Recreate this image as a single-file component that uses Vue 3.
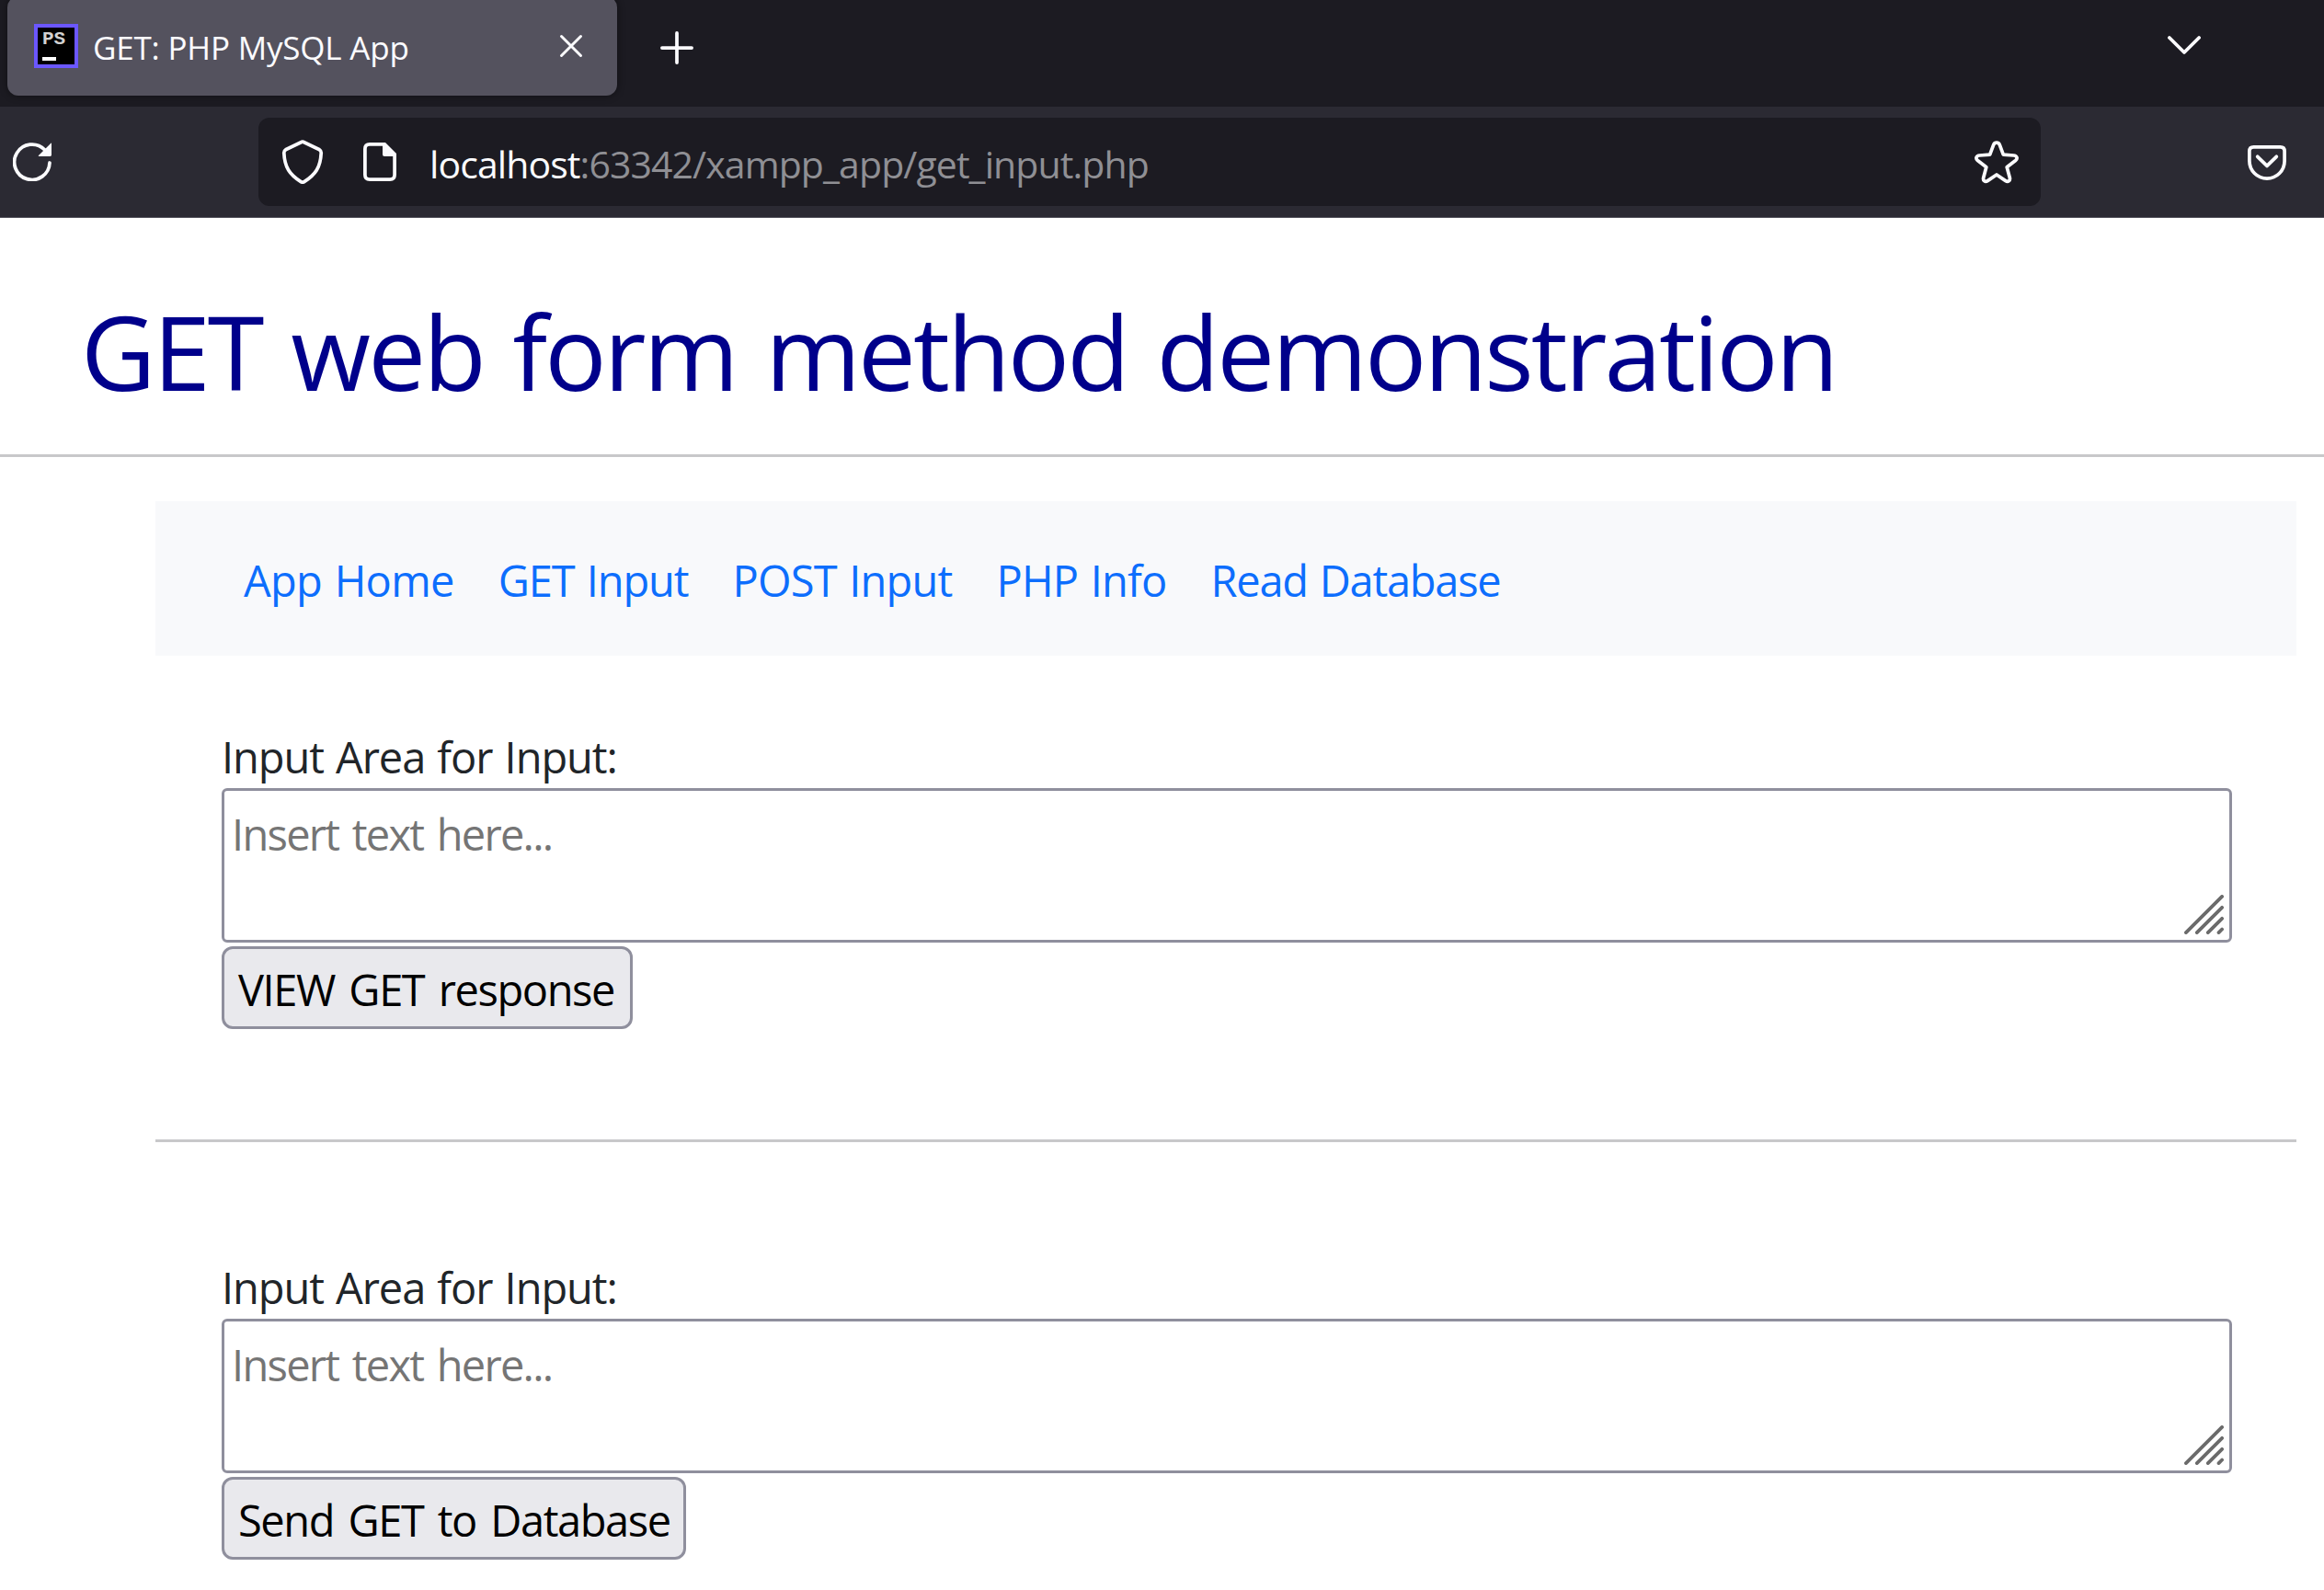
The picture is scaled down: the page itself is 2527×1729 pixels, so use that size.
<script setup>
const links = [
  { label: 'App Home', cls: 'home' },
  { label: 'GET Input', cls: 'get' },
  { label: 'POST Input', cls: 'post' },
  { label: 'PHP Info', cls: 'info' },
  { label: 'Read Database', cls: 'read' }
]
const forms = [
  { id: 'view', button: 'VIEW GET response' },
  { id: 'send', button: 'Send GET to Database' }
]
</script>

<template>
  <div class="window">
    <div class="tabstrip">
      <div class="tab">
        <div class="favicon"><span class="fav-text">PS</span><span class="fav-bar"></span></div>
        <span class="tab-title">GET: PHP MySQL App</span>
        <svg class="close" width="28" height="28" viewBox="0 0 28 28"><path d="M3.5 3.5 24.5 24.5M24.5 3.5 3.5 24.5" /></svg>
      </div>
      <svg class="plus" width="36" height="36" viewBox="0 0 36 36"><path d="M18 1.9V34.1M1.9 18H34.1" /></svg>
      <svg class="chevron" width="36" height="20" viewBox="0 0 36 20"><path d="M1.9 2 18 18 34.1 2" /></svg>
    </div>

    <div class="toolbar">
      <svg class="reload" width="42" height="42" viewBox="0 0 42 42">
        <path d="M40 22A19.2 19.2 0 1 1 34.5 7.8" />
        <path class="solid" d="M41.6 .6Q42 .2 42 1V13.6Q42 15 40.6 15H28.6Q27 15 28 14Z" />
      </svg>
      <div class="urlbar">
        <svg class="shield" width="48" height="48" viewBox="0 0 48 48"><path d="M22.3 2.8Q24 1.4 25.7 2.8L42.4 10.8Q44.4 12 44.2 14.5C43.5 30 38 38 25.8 45.6Q24 46.8 22.2 45.6C10 38 4.5 30 3.8 14.5Q3.6 12 5.6 10.8Z" /></svg>
        <svg class="page-icon" width="36" height="42" viewBox="0 0 36 42">
          <path d="M7 1.9H22L34.1 14V35Q34.1 40.1 29 40.1H7Q1.9 40.1 1.9 35V7Q1.9 1.9 7 1.9Z" />
          <path class="solid" d="M21 0H24L36 12V15H23Q21 15 21 13Z" />
        </svg>
        <span class="url"><span class="host">localhost</span><span class="path">:63342/xampp_app/get_input.php</span></span>
        <svg class="star" width="48" height="48" viewBox="0 0 48 48"><path d="M20.8 5.2C22 2.4 26 2.4 27.2 5.2L31.3 16.2 42.5 17C46.2 17.3 47.2 20.3 44.6 22.5L35.2 29.8 38.3 41.3C39.1 44.6 36.4 46.3 33.8 44.6L24 38 14.2 44.6C11.6 46.3 8.9 44.6 9.7 41.3L12.8 29.8 3.4 22.5C.8 20.3 1.8 17.3 5.5 17L16.7 16.2Z" /></svg>
      </div>
      <svg class="pocket" width="42" height="38" viewBox="0 0 42 38">
        <path d="M6.5 1.9H35.5Q40.1 1.9 40.1 6.5V17A19.1 19.1 0 0 1 1.9 17V6.5Q1.9 1.9 6.5 1.9Z" />
        <path d="M10.7 12.3 21 22.4 31.3 12.3" />
      </svg>
    </div>

    <h1>GET web form method demonstration</h1>

    <main>
      <nav>
        <a v-for="l in links" :key="l.cls" :class="l.cls">{{ l.label }}</a>
      </nav>
      <form v-for="f in forms" :key="f.id" :class="f.id" @submit.prevent>
        <label :for="f.id">Input Area for Input:</label>
        <div class="area">
          <textarea :id="f.id" placeholder="Insert text here..."></textarea>
          <svg class="grip" width="43" height="43" viewBox="0 0 43 43"><path d="M1.9 41.1 41.1 1.9M13.8 41.1 41.1 13.8M25.8 41.1 41.1 25.8M37.5 41.1 41.1 37.5" /></svg>
        </div>
        <button>{{ f.button }}</button>
      </form>
    </main>
  </div>
</template>

<style>
body { background: #fff; overflow: hidden; }
</style>

<style scoped>
.window {
  width: 2527px;
  height: 1729px;
  overflow: hidden;
  background: #fff;
  font-family: "Open Sans", "Noto Sans", sans-serif;
}
svg {
  flex: none;
  display: block;
  fill: none;
  stroke: #fbfbfe;
  stroke-width: 3.75;
  stroke-linecap: round;
  stroke-linejoin: round;
}
svg .solid { fill: #fbfbfe; stroke: none; }

.tabstrip {
  display: flex;
  align-items: flex-start;
  height: 116px;
  background: #1c1b22;
}
.tab {
  display: flex;
  box-sizing: border-box;
  width: 663px;
  height: 108px;
  margin: -4px 0 0 8px;
  padding: 30px 36px 0 29px;
  border-radius: 12px;
  background: #54525e;
  box-shadow: 0 0 9px rgba(0, 0, 0, .45);
}
.favicon {
  box-sizing: border-box;
  width: 48px;
  height: 48px;
  padding: 3px 0 0 5px;
  border: 4px solid #6b57ff;
  background: #000;
  display: flex;
  flex-direction: column;
}
.fav-text {
  color: #d2d2d2;
  font: bold 21px/20px "Liberation Mono", monospace;
  letter-spacing: 0;
}
.fav-bar { width: 15px; height: 4px; margin-top: 9px; background: #fff; }
.tab-title {
  margin: 2px 0 0 16px;
  color: #fbfbfe;
  font-size: 35px;
  line-height: 48px;
  letter-spacing: -.2px;
  white-space: nowrap;
}
.close { margin: 10px 0 0 auto; stroke-width: 3; }
.plus { margin: 34px 0 0 47px; }
.chevron { margin: 39px 134px 0 auto; }

.toolbar {
  display: flex;
  align-items: center;
  box-sizing: border-box;
  height: 121px;
  border-bottom: 1px solid #53525c;
  background: #2b2a33;
}
.reload { margin-left: 14px; }
.urlbar {
  display: flex;
  align-items: center;
  box-sizing: border-box;
  width: 1938px;
  height: 96px;
  margin-left: 225px;
  padding: 0 24px;
  border-radius: 12px;
  background: #1c1b22;
}
.page-icon { margin-left: 42px; }
.url {
  margin: 4px auto 0 36px;
  font-size: 41px;
  line-height: 60px;
  letter-spacing: -.91px;
  white-space: nowrap;
}
.host { color: #fbfbfe; }
.path { color: #8f8f94; }
.pocket { margin: 2px 0 0 225px; }

h1 {
  height: 184px;
  margin: 0;
  padding: 73px 0 0 88px;
  border-bottom: 3px solid #c8c8ca;
  color: #00008b;
  font-size: 112px;
  font-weight: 400;
  line-height: 144px;
  letter-spacing: -2.9px;
  word-spacing: 5.5px;
  white-space: nowrap;
}
main { margin: 48px 30px 0 169px; }
nav {
  display: flex;
  gap: 48px;
  box-sizing: border-box;
  height: 168px;
  padding: 50px 0 0 96px;
  background: #f8f9fb;
  color: #0d6efd;
  font-size: 47px;
  line-height: 72px;
  word-spacing: 2px;
  white-space: nowrap;
}
.home { letter-spacing: -.7px; }
.get { letter-spacing: -1.1px; }
.post { letter-spacing: -.8px; }
.info { letter-spacing: -.8px; }
.read { letter-spacing: -1.25px; }

form { padding: 75px 70px 0 72px; }
form.view { height: 451px; border-bottom: 3px solid #c8c8ca; }
form.send { padding-top: 123px; }
label {
  display: block;
  height: 69px;
  padding-top: 1px;
  box-sizing: border-box;
  color: #212529;
  font-size: 47px;
  line-height: 69px;
  letter-spacing: -1.07px;
  word-spacing: 2px;
}
.area { position: relative; height: 168px; }
textarea {
  display: block;
  box-sizing: border-box;
  width: 100%;
  height: 168px;
  margin: 0;
  padding: 11px 8px;
  border: 3px solid #8f8f9d;
  border-radius: 6px;
  background: #fff;
  outline: 0;
  resize: none;
  overflow: hidden;
  font: 47px/72px "Open Sans", "Noto Sans", sans-serif;
  letter-spacing: -1.74px;
  word-spacing: 4px;
}
textarea::placeholder { color: #757575; opacity: 1; }
.grip {
  position: absolute;
  right: 9px;
  bottom: 9px;
  stroke: #6b6b6b;
}
button {
  display: block;
  box-sizing: border-box;
  height: 90px;
  margin: 4px 0 0;
  padding: 5px 0 0 15px;
  border: 3px solid #8f8f9d;
  border-radius: 12px;
  background: #e9e9ed;
  color: #000;
  font: 47px/79px "Open Sans", "Noto Sans", sans-serif;
  letter-spacing: -1.4px;
  word-spacing: 4.5px;
  text-align: left;
  white-space: nowrap;
}
.view button { width: 447px; }
.send button { width: 505px; }
</style>
